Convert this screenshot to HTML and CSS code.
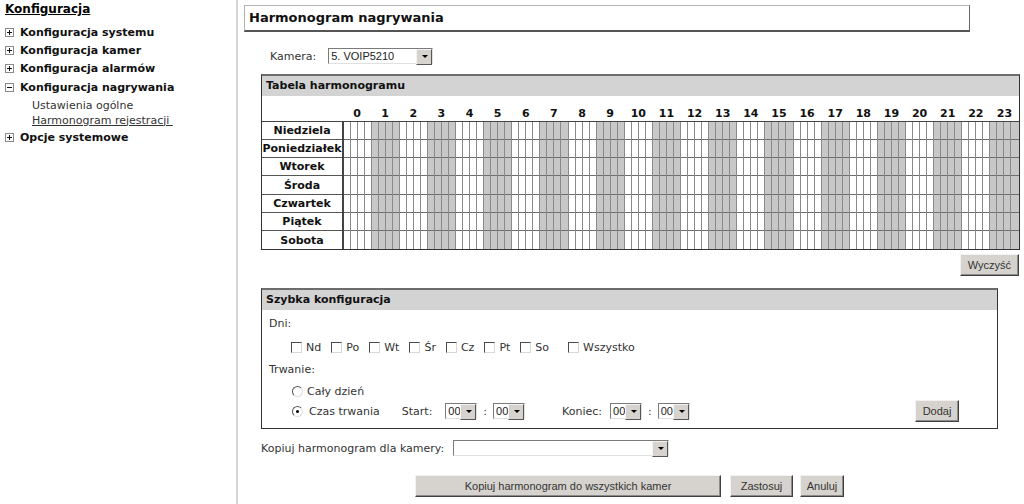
FILE: index.html
```html
<!DOCTYPE html>
<html lang="pl">
    <head>
        <meta charset="UTF-8">
        <title>Harmonogram nagrywania</title>
        <link rel="stylesheet" href="styles.css">
    </head>

    <body>
        <div class="layout">
            <aside class="sidebar">
                <a href="#" class="side-title">Konfiguracja</a>
                <ul class="menu">
                    <li><svg class="toggle" width="9" height="9"><rect x="0.5" y="0.5" width="8" height="8" fill="#fff" stroke="#8a8a8a"/><path d="M2 4.5h5M4.5 2v5" stroke="#111"/></svg>Konfiguracja systemu</li>
                    <li><svg class="toggle" width="9" height="9"><rect x="0.5" y="0.5" width="8" height="8" fill="#fff" stroke="#8a8a8a"/><path d="M2 4.5h5M4.5 2v5" stroke="#111"/></svg>Konfiguracja kamer</li>
                    <li><svg class="toggle" width="9" height="9"><rect x="0.5" y="0.5" width="8" height="8" fill="#fff" stroke="#8a8a8a"/><path d="M2 4.5h5M4.5 2v5" stroke="#111"/></svg>Konfiguracja alarmów</li>
                    <li><svg class="toggle" width="9" height="9"><rect x="0.5" y="0.5" width="8" height="8" fill="#fff" stroke="#8a8a8a"/><path d="M2 4.5h5" stroke="#111"/></svg>Konfiguracja nagrywania</li>
                    <li class="submenu">
                        <a href="#">Ustawienia ogólne</a>
                        <a href="#" class="current">Harmonogram rejestracji&nbsp;</a>
                    </li>
                    <li><svg class="toggle" width="9" height="9"><rect x="0.5" y="0.5" width="8" height="8" fill="#fff" stroke="#8a8a8a"/><path d="M2 4.5h5M4.5 2v5" stroke="#111"/></svg>Opcje systemowe</li>
                </ul>
            </aside>

            <main class="content">
                <div class="page-title">Harmonogram nagrywania</div>

                <div class="inner">
                    <div class="camera-row">
                        <span class="camera-label">Kamera:</span>
                        <span class="combo combo-camera">
                            <select id="camera">
                                <option>5. VOIP5210</option>
                            </select>
                        </span>
                    </div>

                    <div class="panel schedule">
                        <div class="panel-head">Tabela harmonogramu</div>
                        <table class="grid" id="grid"></table>
                    </div>

                    <div class="clear-row">
                        <button class="btn" type="button">Wyczyść</button>
                    </div>

                    <div class="panel quick">
                        <div class="panel-head">Szybka konfiguracja</div>
                        <div class="quick-body">
                            <div class="q-label">Dni:</div>
                            <div class="days">
                                <label><input type="checkbox">Nd</label>
                                <label><input type="checkbox">Po</label>
                                <label><input type="checkbox">Wt</label>
                                <label><input type="checkbox">Śr</label>
                                <label><input type="checkbox">Cz</label>
                                <label><input type="checkbox">Pt</label>
                                <label><input type="checkbox">So</label>
                                <label class="all"><input type="checkbox">Wszystko</label>
                            </div>

                            <div class="q-label">Trwanie:</div>
                            <div class="radio-row">
                                <label><input type="radio" name="duration">Cały dzień</label>
                            </div>
                            <div class="radio-row time-row">
                                <label><input type="radio" name="duration" checked>Czas trwania</label>
                                <span class="time-label start">Start:</span>
                                <span class="combo combo-time"><select><option>00</option></select></span>
                                <span class="colon">:</span>
                                <span class="combo combo-time"><select><option>00</option></select></span>
                                <span class="time-label end">Koniec:</span>
                                <span class="combo combo-time"><select><option>00</option></select></span>
                                <span class="colon">:</span>
                                <span class="combo combo-time"><select><option>00</option></select></span>
                                <button class="btn btn-add" type="button">Dodaj</button>
                            </div>
                        </div>
                    </div>

                    <div class="copy-row">
                        <span>Kopiuj harmonogram dla kamery:</span>
                        <span class="combo combo-copy"><select><option></option></select></span>
                    </div>

                    <div class="actions">
                        <button class="btn btn-copy" type="button">Kopiuj harmonogram do wszystkich kamer</button>
                        <button class="btn btn-apply" type="button">Zastosuj</button>
                        <button class="btn btn-cancel" type="button">Anuluj</button>
                    </div>
                </div>
            </main>
        </div>

        <script>
            var days = ["Niedziela", "Poniedziałek", "Wtorek", "Środa", "Czwartek", "Piątek", "Sobota"];
            var grid = document.getElementById("grid");
            var html = "<colgroup><col class='day-col'>";

            for (var i = 0; i < 96; i++) {
                html += "<col>";
            }
            html += "</colgroup><tr class='hours'><td></td>";

            for (var h = 0; h < 24; h++) {
                html += "<th colspan='4'>" + h + "</th>";
            }
            html += "</tr>";

            for (var d = 0; d < days.length; d++) {
                html += "<tr><th class='day'>" + days[d] + "</th>";
                for (var q = 0; q < 96; q++) {
                    var odd = Math.floor(q / 4) % 2 == 1;
                    html += "<td class='" + (odd ? "shade" : "") + "'></td>";
                }
                html += "</tr>";
            }

            grid.innerHTML = html;
        </script>
    </body>
</html>
```

FILE: styles.css
```css
* {
    box-sizing: border-box;
}

body {
    margin: 0;
    font-family: "DejaVu Sans", Verdana, sans-serif;
    font-size: 11px;
    color: #333;
    background: #fff;
}

.layout {
    display: flex;
    min-height: 504px;
}

/* sidebar */

.sidebar {
    width: 238px;
    flex: none;
    padding: 1px 0 0 5px;
    border-right: 2px solid #d4d4d4;
}

.side-title {
    display: block;
    font-size: 12px;
    font-weight: bold;
    line-height: 16px;
    color: #000;
    text-decoration: underline;
    margin-bottom: 6px;
}

.menu {
    list-style: none;
    margin: 0;
    padding: 0;
}

.menu li {
    display: flex;
    align-items: center;
    height: 18.4px;
    font-weight: bold;
    color: #111;
}

.toggle {
    flex: none;
    margin-right: 6px;
}

.menu .submenu {
    display: block;
    height: auto;
    font-weight: normal;
    padding: 1px 0 1px 27px;
}

.submenu a {
    display: block;
    line-height: 15px;
    color: #333;
    text-decoration: none;
}

.submenu a.current {
    text-decoration: underline;
}

/* content */

.content {
    flex: 1;
    padding: 5px 0 0 6px;
}

.page-title {
    width: 726px;
    height: 27px;
    padding-left: 4px;
    border: 1px solid #b4b4b4;
    border-right-color: #6a6a6a;
    border-bottom: 2px solid #555;
    font-size: 13px;
    font-weight: bold;
    line-height: 24px;
    color: #111;
}

.inner {
    padding-left: 17px;
}

.camera-row {
    display: flex;
    align-items: center;
    height: 16px;
    margin-top: 16px;
    padding-left: 9px;
}

.camera-label {
    margin-right: 12px;
}

/* combo boxes */

.combo {
    position: relative;
    display: inline-block;
    height: 16px;
}

.combo select {
    appearance: none;
    -webkit-appearance: none;
    width: 100%;
    height: 16px;
    margin: 0;
    padding: 0 0 0 2px;
    border: 1px solid;
    border-color: #7a7a7a #e0e0e0 #e0e0e0 #7a7a7a;
    background: #fff;
    font-family: "Liberation Sans", Arial, sans-serif;
    font-size: 11px;
    color: #222;
    outline: none;
}

.combo::before {
    content: "";
    position: absolute;
    top: 1px;
    right: 1px;
    width: 14px;
    height: 14px;
    background: #d6d3ce;
    border: 1px solid;
    border-color: #f4f4f4 #555 #555 #f4f4f4;
}

.combo::after {
    content: "";
    position: absolute;
    top: 7px;
    right: 5px;
    border-left: 3px solid transparent;
    border-right: 3px solid transparent;
    border-top: 3px solid #000;
}

.combo-camera {
    width: 105px;
}

.combo-time {
    width: 32px;
}

.combo-copy {
    width: 216px;
}

/* panels */

.panel {
    border: 1px solid #333;
    border-top: 2px solid #6c6c6c;
}

.panel-head {
    height: 20px;
    padding-left: 4px;
    background: #d3d3d3;
    font-weight: bold;
    line-height: 20px;
    color: #111;
}

.schedule {
    width: 759px;
    margin-top: 10px;
}

.grid {
    width: 100%;
    table-layout: fixed;
    border-collapse: collapse;
}

.grid .day-col {
    width: 81px;
}

.grid .hours th {
    height: 25px;
    padding: 0 0 1px;
    vertical-align: bottom;
    font-weight: bold;
    font-size: 11px;
    color: #111;
    border-bottom: 1px solid #444;
}

.grid .hours td {
    border-left: none;
    border-top: none;
    border-bottom: 1px solid #444;
}

.grid th.day {
    height: 18.3px;
    padding: 0;
    font-weight: bold;
    font-size: 11px;
    color: #111;
    border-top: 1px solid #555;
    border-right: 2px solid #444;
}

.grid td {
    padding: 0;
    border-left: 1px solid #8a8a8a;
    border-top: 1px solid #6e6e6e;
}

.grid td.shade {
    background: #c8c8c8;
}

.clear-row {
    display: flex;
    justify-content: flex-end;
    width: 758px;
    margin-top: 4px;
}

/* buttons */

.btn {
    height: 22px;
    padding: 0 7px;
    border: 1px solid;
    border-color: #f2f2f2 #404040 #404040 #f2f2f2;
    box-shadow: inset -1px -1px 0 #8c8c8c;
    background: #d6d3ce;
    font-family: "Liberation Sans", Arial, sans-serif;
    font-size: 11px;
    color: #333;
}

/* quick config */

.quick {
    width: 737px;
    margin-top: 12px;
}

.quick-body {
    padding: 6px 38px 6px 7px;
}

.q-label {
    line-height: 16px;
}

.days {
    display: flex;
    align-items: center;
    height: 16px;
    margin: 7px 0;
    padding-left: 22px;
}

.days label {
    display: flex;
    align-items: center;
    margin-right: 10px;
}

.days label.all {
    margin-left: 9px;
}

input[type="checkbox"] {
    appearance: none;
    -webkit-appearance: none;
    width: 11px;
    height: 11px;
    margin: 0 4px 0 0;
    border: 1px solid;
    border-color: #4a4a4a #d8d8d8 #d8d8d8 #4a4a4a;
    background: #fff;
}

input[type="radio"] {
    appearance: none;
    -webkit-appearance: none;
    position: relative;
    width: 11px;
    height: 11px;
    margin: 0 4px 0 0;
    border: 1px solid;
    border-color: #555 #ddd #ddd #555;
    border-radius: 50%;
    background: #fff;
}

input[type="radio"]:checked::after {
    content: "";
    position: absolute;
    top: 3px;
    left: 3px;
    width: 3px;
    height: 3px;
    border-radius: 50%;
    background: #000;
}

.radio-row {
    display: flex;
    align-items: center;
    height: 16px;
    margin-top: 5px;
    padding-left: 23px;
}

.radio-row label {
    display: flex;
    align-items: center;
}

.time-row {
    height: 22px;
    margin-top: 1px;
}

.time-row label input {
    margin-right: 6px;
}

.time-label.start {
    margin: 0 13px 0 22px;
}

.time-label.end {
    margin: 0 8px 0 37px;
}

.colon {
    margin: 0 6px;
}

.btn-add {
    margin-left: auto;
    width: 44px;
    padding: 0;
}

/* bottom */

.copy-row {
    display: flex;
    align-items: center;
    height: 16px;
    margin-top: 11px;
}

.copy-row span:first-child {
    margin-right: 9px;
}

.actions {
    display: flex;
    margin-top: 19px;
    padding-left: 154px;
}

.btn-copy {
    width: 306px;
}

.btn-apply {
    width: 63px;
    margin-left: 9px;
}

.btn-cancel {
    width: 44px;
    margin-left: 7px;
    padding: 0;
}
```
